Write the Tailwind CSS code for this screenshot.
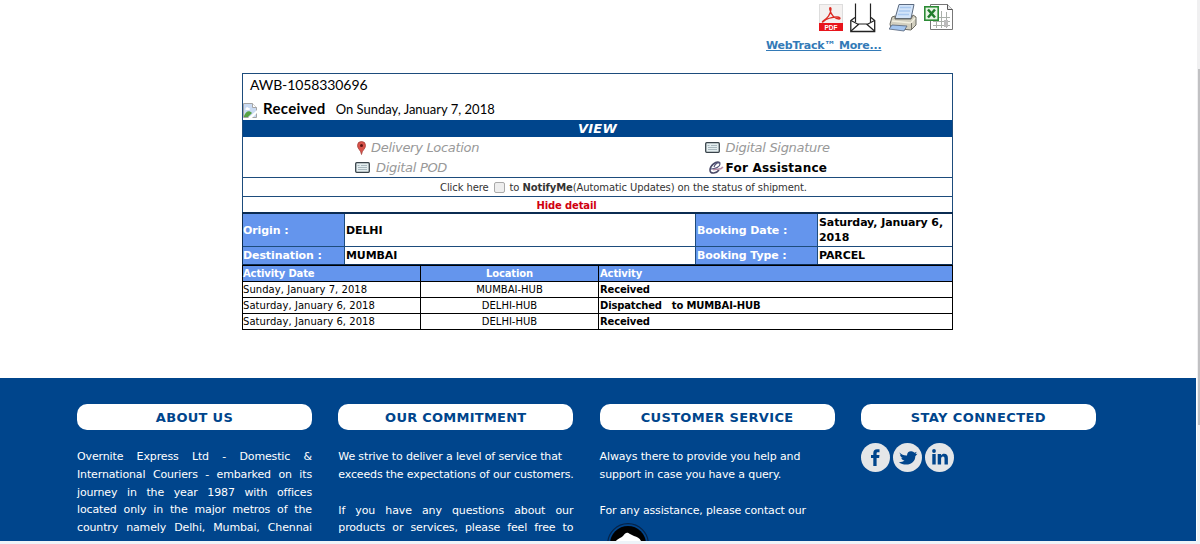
<!DOCTYPE html>
<html lang="en">
<head>
    <meta charset="UTF-8">
    <meta name="viewport" content="width=device-width, initial-scale=1.0">
    <title>Overnite Express - WebTrack</title>
    <script src="https://cdn.jsdelivr.net/npm/@tailwindcss/browser@4"></script>
</head>
<body class="h-[544px] overflow-hidden bg-white font-['DejaVu_Sans',sans-serif] text-black">
<div class="flex h-[544px] w-[1200px]">
    <div class="flex w-[1197px] flex-col">
        <main class="h-[378px] pl-[242px]">
            <!-- Export icons -->
            <div class="flex h-[37px] items-start pt-[3px] pl-[577px]">
                <svg class="mr-[6px] h-[29px] w-[25px] shrink-0" viewBox="0 0 25 29">
                    <rect x="0.5" y="1.5" width="23" height="26" fill="#f4f1f0" stroke="#ddd"/>
                    <path d="M4 18c4-2 8-7 8-12 0-2-2-2-1 1 1 5 5 9 9 9 2 0 1-2-2-2-5 0-11 2-13 4-2 2-2 1-1 0" fill="none" stroke="#dc2a22" stroke-width="1.3"/>
                    <rect y="20" width="24" height="8" fill="#e8141b"/>
                    <text x="12" y="26.6" text-anchor="middle" font-size="6.5" font-weight="bold" fill="#fff" font-family="Liberation Sans">PDF</text>
                </svg>
                <svg class="mr-[13px] h-[30px] w-[26px] shrink-0" viewBox="0 0 26 30" fill="none">
                    <path d="M5.500 19V0.500M20.500 19V0.500" stroke="#222" stroke-width="1.2"/>
                    <path d="M5 14.500L0.800 17.500V28.500H24.700V17.500L21 14.500" stroke="#222" stroke-width="1.3"/>
                    <path d="M1 17.500l6.500 3.500h10.500l6.500-3.500M1 28l8-7M24.500 28l-8-7" stroke="#222" stroke-width="1.2"/>
                </svg>
                <svg class="mr-[7px] h-[30px] w-[28px] shrink-0" viewBox="0 0 28 30">
                    <path d="M10 1.500h15l-3 14H6z" fill="#d3e4f9" stroke="#5b6a80" stroke-width="1"/>
                    <path d="M11 4.500h11M10 8h11M9 11.500h11" stroke="#a9c8ef" stroke-width="1.5"/>
                    <path d="M3 14l3-1v3h16l2-4 3 2v8l-5 5-20-2-1-4z" fill="#d2cfbf" stroke="#6b6a62"/>
                    <path d="M3 18l19 2 4-5" fill="none" stroke="#f2efdf" stroke-width="1.5"/>
                    <path d="M3 22l15 1-3 5-15-2z" fill="#a3c5ef" stroke="#566378" stroke-width=".8"/>
                    <path d="M22.500 20v6" stroke="#77756a"/>
                </svg>
                <svg class="h-[29px] w-[30px] shrink-0" viewBox="0 0 30 29">
                    <path d="M6.500 1.500h17l5 5v20h-22z" fill="#fff" stroke="#777"/>
                    <path d="M23.500 1.500v5h5" fill="#e8e8e8" stroke="#555"/>
                    <path d="M9 14.500h17M9 18.500h17M9 22.500h17M12.500 12v13M17.500 8v17M22.500 9v16" stroke="#aab0aa"/>
                    <path d="M20 17v7h4v-7z" fill="#bbb"/>
                    <rect x=".8" y="3.800" width="13.400" height="13.400" fill="#e9f4e6" stroke="#2c8b35" stroke-width="1.600"/>
                    <path d="M4 6.500l7 8M11 6.500l-7 8" stroke="#1f7d2b" stroke-width="2.500"/>
                </svg>
            </div>
            <div class="flex h-[36px] items-start pl-[524px]">
                <a href="#" class="text-[11px] leading-[18px] font-bold tracking-[-0.2px] whitespace-nowrap text-[#337ab7] underline">WebTrack™ More...</a>
            </div>

            <!-- Shipment summary -->
            <section class="w-[711px] border border-b-0 border-[#1d4c7c]">
                <div class="h-[23px] pl-[7px] font-[Lato,sans-serif] text-[14px] leading-[22px] tracking-[-0.1px]">AWB-1058330696</div>
                <div class="flex h-[23px] items-center font-[Lato,sans-serif]">
                    <svg class="mt-[4px] mr-[6px] h-[15px] w-[14px]" viewBox="0 0 14 15">
                        <path d="M.5.500h9l4 4v10H.500z" fill="#c9daf2" stroke="#a5a5a5"/>
                        <path d="M9.500.500v4h4" fill="#fff" stroke="#a5a5a5"/>
                        <path d="M2.500 6c0-2 3-2 3-1 2 0 2 2 0 2h-3z" fill="#fff"/>
                        <path d="M1 13c2-5 5-6 8-3l-4 4H1z" fill="#57a244"/>
                        <path d="M5 15l9-8v3l-5 5z" fill="#fff"/>
                    </svg>
                    <span class="text-[15px] font-bold tracking-[0.3px]">Received</span>
                    <span class="ml-[10px] pt-[2px] text-[13px]">On Sunday, January 7, 2018</span>
                </div>
                <div class="h-[17px] bg-[#00458c] text-center text-[13px] leading-[18px] font-bold tracking-[0.2px] text-white italic">VIEW</div>
                <div class="grid h-[41px] grid-cols-2 grid-rows-[20px_20px] border-b border-[#1d4c7c] text-[13px] leading-[20px] tracking-[-0.3px] text-[#999] italic">
                    <div class="flex items-center pt-px pl-[113px]">
                        <svg class="mr-[4px] h-[14px] w-[11px]" viewBox="0 0 11 14">
                            <path d="M5.500 13.500C5 9 1.500 8 1.500 4.500a4 4 0 0 1 8 0C9.500 8 6 9 5.500 13.500z" fill="#d9524a" stroke="#a5413b" stroke-width=".8"/>
                            <circle cx="5.500" cy="4.500" r="1.500" fill="#5d1514"/>
                        </svg>
                        <span>Delivery Location</span>
                    </div>
                    <div class="flex items-center pt-px pl-[107px]">
                        <svg class="mr-[6px] h-[11px] w-[15px]" viewBox="0 0 15 11">
                            <rect x=".7" y=".7" width="13.600" height="9.600" rx="1" fill="#e4eef0" stroke="#39434a" stroke-width="1.300"/>
                            <path d="M2.500 3.500h2M6 3.500h6M3 5.500h9M3 7.500h9" stroke="#a9b8be"/>
                        </svg>
                        <span>Digital Signature</span>
                    </div>
                    <div class="flex items-center pt-px pl-[112px]">
                        <svg class="mr-[6px] h-[11px] w-[15px]" viewBox="0 0 15 11">
                            <rect x=".7" y=".7" width="13.600" height="9.600" rx="1" fill="#e4eef0" stroke="#39434a" stroke-width="1.300"/>
                            <path d="M2.500 3.500h2M6 3.500h6M3 5.500h9M3 7.500h9" stroke="#a9b8be"/>
                        </svg>
                        <span>Digital POD</span>
                    </div>
                    <div class="flex items-center pt-px pl-[110px]">
                        <svg class="mr-[2px] h-[14px] w-[16px]" viewBox="0 0 16 14" fill="none">
                            <path d="M12 2C8-1 2 5 2 9c0 5 7 3 9 0" stroke="#4a4a68" stroke-width="1.600"/>
                            <path d="M3 8c4 0 9-2 9-5s-5-1-6 3" stroke="#55557a" stroke-width="1.200"/>
                            <path d="M5 9c3-2 7 1 10-3" stroke="#b58aa5" stroke-width="1.500"/>
                        </svg>
                        <span class="text-[12px] font-bold tracking-[0.22px] text-black not-italic">For Assistance</span>
                    </div>
                </div>
                <div class="flex h-[19px] items-center border-b border-[#1d4c7c] pl-[197px] text-[10px] tracking-[-0.1px] whitespace-pre text-[#333]">
                    <span>Click here</span>
                    <span class="mx-[5px] size-[11px] rounded-[2px] border border-[#aaa] bg-[#eee]"></span>
                    <span>to <b>NotifyMe</b>(Automatic Updates) on the status of shipment.</span>
                </div>
                <div class="h-[15px] pr-[62px] text-center text-[10px] leading-[17px] font-bold tracking-[-0.15px] text-[#d00010]">Hide detail</div>

                <!-- Booking details -->
                <div class="-mx-px grid grid-cols-[101px_351px_122px_135px] grid-rows-[32px_18px] border-x border-t-2 border-b border-[#0b2c52] text-[11px] leading-[15px] font-bold tracking-[-0.1px]">
                    <div class="flex items-center bg-[#6495ed] text-white">Origin :</div>
                    <div class="flex items-center border-l border-[#1d4c7c] pl-px">DELHI</div>
                    <div class="flex items-center border-l border-[#1d4c7c] bg-[#6495ed] pl-px text-white">Booking Date :</div>
                    <div class="flex items-center border-l border-[#1d4c7c] pl-px">Saturday, January 6, 2018</div>
                    <div class="flex items-center border-t border-[#1d4c7c] bg-[#6495ed] text-white">Destination :</div>
                    <div class="flex items-center border-t border-l border-[#1d4c7c] pl-px">MUMBAI</div>
                    <div class="flex items-center border-t border-l border-[#1d4c7c] bg-[#6495ed] pl-px text-white">Booking Type :</div>
                    <div class="flex items-center border-t border-l border-[#1d4c7c] pl-px">PARCEL</div>
                </div>

                <!-- Activity log -->
                <table class="-mx-px w-[711px] table-fixed border-collapse text-[10px] leading-[15px]">
                    <colgroup>
                        <col class="w-[178px]">
                        <col class="w-[178px]">
                        <col>
                    </colgroup>
                    <tr class="h-[16px] bg-[#6495ed] text-left tracking-[-0.13px] text-white">
                        <th class="border border-black p-0">Activity Date</th>
                        <th class="border border-black p-0 text-center">Location</th>
                        <th class="border border-black p-0 pl-px">Activity</th>
                    </tr>
                    <tr class="h-[16px]">
                        <td class="border border-black p-0 tracking-[0.05px]">Sunday, January 7, 2018</td>
                        <td class="border border-black p-0 text-center">MUMBAI-HUB</td>
                        <td class="border border-black p-0 pl-px font-bold tracking-[-0.15px]">Received</td>
                    </tr>
                    <tr class="h-[16px]">
                        <td class="border border-black p-0 tracking-[0.05px]">Saturday, January 6, 2018</td>
                        <td class="border border-black p-0 text-center">DELHI-HUB</td>
                        <td class="border border-black p-0 pl-px font-bold tracking-[-0.15px]">Dispatched &nbsp; to MUMBAI-HUB</td>
                    </tr>
                    <tr class="h-[16px]">
                        <td class="border border-black p-0 tracking-[0.05px]">Saturday, January 6, 2018</td>
                        <td class="border border-black p-0 text-center">DELHI-HUB</td>
                        <td class="border border-black p-0 pl-px font-bold tracking-[-0.15px]">Received</td>
                    </tr>
                </table>
            </section>
        </main>

        <!-- Footer -->
        <footer class="grid h-[163px] w-[1196px] grid-cols-[235px_235px_235px_235px] gap-x-[26.300px] overflow-hidden bg-[#00458c] pt-[26px] pl-[77px] text-[11px] leading-[17.800px] tracking-[-0.14px] text-white">
            <div>
                <h3 class="mb-[18px] h-[26px] rounded-[10px] bg-white text-center text-[13px] leading-[27px] font-bold tracking-[0.3px] text-[#00458c]">ABOUT US</h3>
                <p class="text-justify">Overnite Express Ltd - Domestic &amp; International Couriers - embarked on its journey in the year 1987 with offices located only in the major metros of the country namely Delhi, Mumbai, Chennai and Kolkata.</p>
            </div>
            <div>
                <h3 class="mb-[18px] h-[26px] rounded-[10px] bg-white text-center text-[13px] leading-[27px] font-bold tracking-[0.25px] text-[#00458c]">OUR COMMITMENT</h3>
                <p class="whitespace-nowrap">We strive to deliver a level of service that<br>exceeds the expectations of our customers.</p>
                <p class="mt-[18px] text-justify">If you have any questions about our products or services, please feel free to contact us and we shall be glad to help you.</p>
            </div>
            <div>
                <h3 class="mb-[18px] h-[26px] rounded-[10px] bg-white text-center text-[13px] leading-[27px] font-bold tracking-[0.35px] text-[#00458c]">CUSTOMER SERVICE</h3>
                <p>Always there to provide you help and<br>support in case you have a query.</p>
                <p class="mt-[18px]">For any assistance, please contact our</p>
                <svg class="mt-[4px] ml-[7px] h-[42px] w-[42px]" viewBox="0 0 42 42">
                    <circle cx="21" cy="21" r="20.300" fill="none" stroke="#062347" stroke-width="1.200"/>
                    <circle cx="21" cy="21" r="18" fill="#000"/>
                    <path d="M8 19c2-3 6-4 8-6 3-4 4-4 7-2l4 2c4 1 7 3 8 8v12H8z" fill="#fff"/>
                </svg>
            </div>
            <div>
                <h3 class="mb-[13px] h-[26px] rounded-[10px] bg-white text-center text-[13px] leading-[27px] font-bold tracking-[0.42px] text-[#00458c]">STAY CONNECTED</h3>
                <div class="flex gap-[3px]">
                    <svg class="size-[29px]" viewBox="0 0 29 29">
                        <circle cx="14.500" cy="14.500" r="14.500" fill="#e4e6e8"/>
                        <path d="M12.300 23v-8H10v-3h2.300v-1.800c0-2.700 1.300-4 3.700-4h2.500v3h-1.600c-1 0-1.300.400-1.300 1.300V12h2.900l-.4 3h-2.500v8z" fill="#00458c"/>
                    </svg>
                    <svg class="size-[29px]" viewBox="0 0 29 29">
                        <circle cx="14.500" cy="14.500" r="14.500" fill="#e4e6e8"/>
                        <path d="M6.500 9.500c2 2.300 4.500 3.200 7.500 3 0-3 2-4.500 4.300-4.300 1.500.1 2.400.8 3.200 1.600l2.200-1-1.200 2.200 2-.3-2.200 2.500c0 5-4 8.300-9 8.300-3 0-5.500-.8-7.500-2.300 2.300.1 4.200-.4 5.700-1.700-1.600-.2-2.700-1.200-3.200-2.500h1.500c-1.700-.7-2.700-1.900-2.800-3.500l1.200.4C6.900 10.900 6.500 10.300 6.500 9.500z" fill="#00458c"/>
                    </svg>
                    <svg class="size-[29px]" viewBox="0 0 29 29">
                        <circle cx="14.500" cy="14.500" r="14.500" fill="#e4e6e8"/>
                        <path d="M7.300 11h3.400v10.500H7.300zM12.700 11H16v1.400c.7-1 1.800-1.700 3.200-1.700 2.700 0 3.700 1.700 3.700 4.300v6.500h-3.400v-5.700c0-1.500-.4-2.300-1.500-2.300-1.300 0-1.900 1-1.900 2.500v5.500h-3.400z" fill="#00458c"/>
                        <circle cx="9" cy="8" r="1.900" fill="#00458c"/>
                    </svg>
                </div>
            </div>
        </footer>
        <div class="h-[3px] w-[1200px] bg-[#eef3f8]"></div>
    </div>

    <!-- Scrollbar -->
    <div class="h-[541px] w-[3px] bg-[#f0f0f1] pt-[69px] pl-px">
        <div class="h-[356px] bg-[#c1c1c3]"></div>
    </div>
</div>
</body>
</html>
